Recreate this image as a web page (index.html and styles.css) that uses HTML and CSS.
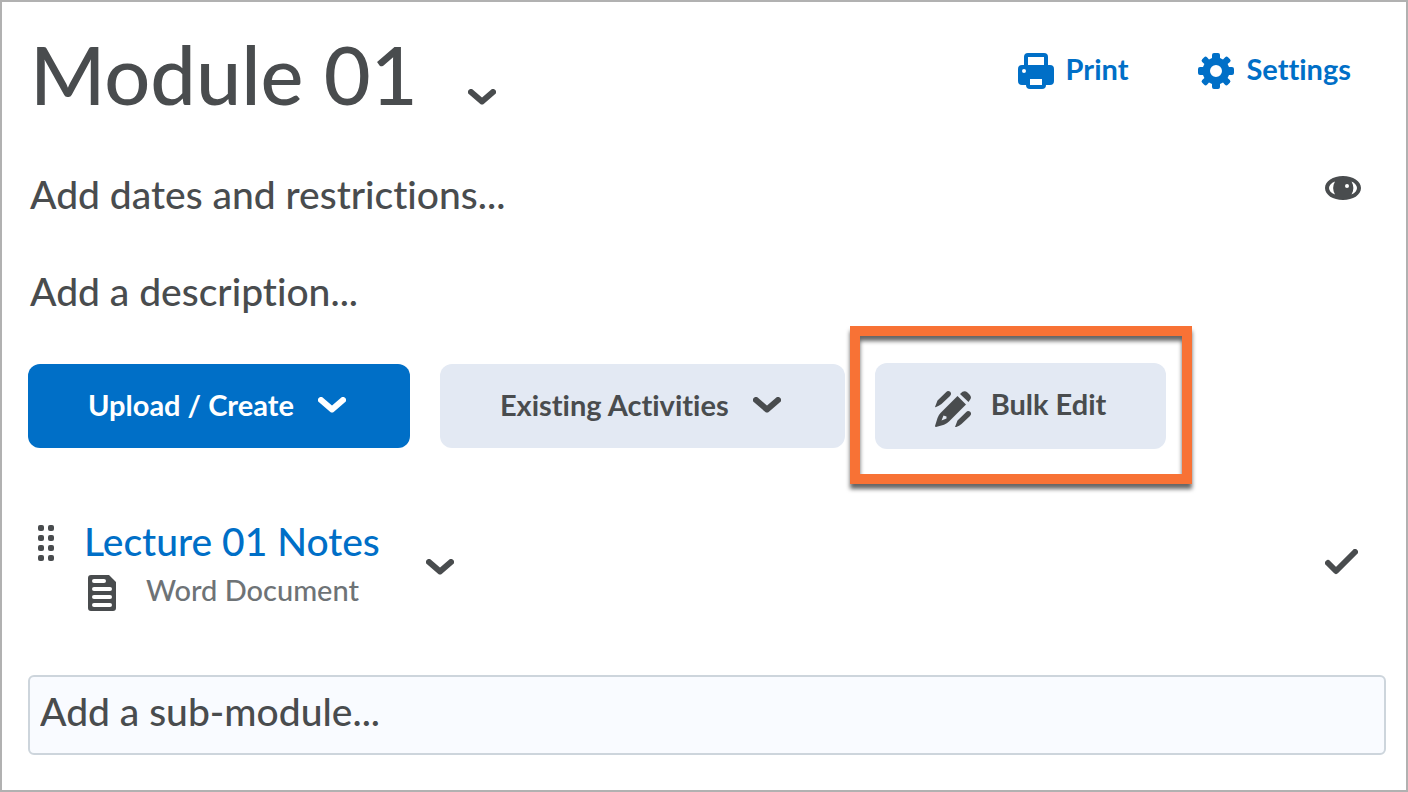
FILE: index.html
```html
<!DOCTYPE html>
<html lang="en">
<head>
    <meta charset="UTF-8">
    <meta name="viewport" content="width=device-width, initial-scale=1.0">
    <title>Module 01</title>
    <link rel="stylesheet" href="styles.css">
</head>
<body>

<main class="module">
    <header class="module-header">
        <h1>Module 01</h1>
        <button class="icon-btn title-menu" type="button" aria-label="Module 01 actions">
            <svg class="chevron" viewBox="0 0 28 16"><path d="M3 3L14 12.5L25 3"/></svg>
        </button>
        <nav class="module-tools">
            <a href="#print">
                <svg class="icon" viewBox="0 0 36 36">
                    <path fill-rule="evenodd" d="M6 12V4a4 4 0 0 1 4-4h16a4 4 0 0 1 4 4v8h2a4 4 0 0 1 4 4v12a4 4 0 0 1-4 4h-4a4 4 0 0 1-4 4H12a4 4 0 0 1-4-4H4a4 4 0 0 1-4-4V16a4 4 0 0 1 4-4zM10 4v8h16V4zM12 26v6h12v-6zM6 16a2 2 0 1 0 0 4a2 2 0 0 0 0-4z"/>
                </svg>
                Print
            </a>
            <a href="#settings">
                <svg class="icon" viewBox="0 0 36 36">
                    <path fill-rule="evenodd" d="M14 2q0-2 2-2h4q2 0 2 2v3l3 1.4l2.200-2.200q1.400-1.400 2.800 0l2 2q1.400 1.400 0 2.800L29.600 11L31 14h3q2 0 2 2v4q0 2-2 2h-3l-1.400 3l2.200 2q1.400 1.400 0 2.800l-2 2q-1.400 1.400-2.800 0L25 29.600L22 31v3q0 2-2 2h-4q-2 0-2-2v-3l-3-1.400l-2 2.200q-1.400 1.400-2.800 0l-2-2q-1.400-1.400 0-2.800L6.400 25L5 22H2q-2 0-2-2v-4q0-2 2-2h3l1.400-3L4.200 9q-1.400-1.400 0-2.800l2-2q1.400-1.400 2.800 0L11 6.400L14 5zM18 12a6 6 0 1 0 0 12a6 6 0 0 0 0-12z"/>
                </svg>
                Settings
            </a>
        </nav>
    </header>

    <div class="module-row">
        <button class="text-btn" type="button">Add dates and restrictions...</button>
        <button class="icon-btn visibility" type="button" aria-label="Visible">
            <svg class="icon eye" viewBox="0 0 36 24">
                <path fill-rule="evenodd" d="M18 0C28 0 36 5 36 12S28 24 18 24S0 19 0 12S8 0 18 0zM10 5.500C6 7 4 9.500 4 12s2 5 6 6.500C7.500 14 7.500 10 10 5.500zM26.500 5.500c2.500 4.500 2.500 8.500 0 13C30 17 32 14.500 32 12s-2-5-5.500-6.500zM22 8a2 2 0 1 0 0 4a2 2 0 0 0 0-4z"/>
            </svg>
        </button>
    </div>

    <div class="module-row">
        <button class="text-btn" type="button">Add a description...</button>
    </div>

    <div class="actions">
        <button class="btn btn-primary" type="button">
            Upload / Create
            <svg class="chevron" viewBox="0 0 28 16"><path d="M3 3L14 12.5L25 3"/></svg>
        </button>
        <button class="btn" type="button">
            Existing Activities
            <svg class="chevron" viewBox="0 0 28 16"><path d="M3 3L14 12.5L25 3"/></svg>
        </button>
        <div class="highlighted">
            <button class="btn btn-bulk" type="button">
                <svg class="icon" viewBox="0 0 36 36">
                    <path fill-rule="evenodd" d="M22.500 5L31 13.500L14 30.500Q12 32.500 9 33.700L1 36Q0 36 0 35L2.500 27Q3.500 24 5.500 22zM8.500 24.500L6.500 29.500L11.500 27.500L11.500 25.500Z"/>
                    <path d="M25 3L27.500 .8Q30 -.8 32.500 1.500L34.500 3.500Q37 6 35.200 8.500L33.500 11Z"/>
                    <path d="M0 16L2.500 9.500L11 1.200Q13 -.8 15.200 .8Q17 3 15 5L6.500 13Q4 15 .5 16.300Z"/>
                    <path d="M20 36L22.500 29.500L31 21.200Q33 19.200 35.200 20.800Q37 23 35 25L26.500 33Q24 35 20.500 36.300Z"/>
                </svg>
                Bulk Edit
            </button>
            <span class="highlight-frame"></span>
        </div>
    </div>

    <section class="topic">
        <svg class="drag-handle" viewBox="0 0 16 36">
            <rect x="0" y="0" width="6" height="6" rx="2"/><rect x="10" y="0" width="6" height="6" rx="2"/>
            <rect x="0" y="10" width="6" height="6" rx="2"/><rect x="10" y="10" width="6" height="6" rx="2"/>
            <rect x="0" y="20" width="6" height="6" rx="2"/><rect x="10" y="20" width="6" height="6" rx="2"/>
            <rect x="0" y="30" width="6" height="6" rx="2"/><rect x="10" y="30" width="6" height="6" rx="2"/>
        </svg>
        <div class="topic-info">
            <a class="topic-link" href="#lecture-01">Lecture 01 Notes</a>
            <div class="topic-type">
                <svg class="doc-icon" viewBox="0 0 28 36">
                    <path fill-rule="evenodd" d="M3 0H21L28 7V33a3 3 0 0 1-3 3H3a3 3 0 0 1-3-3V3a3 3 0 0 1 3-3zM6 4a2 2 0 0 0 0 4H16a2 2 0 0 0 0-4zM6 12a2 2 0 0 0 0 4H22a2 2 0 0 0 0-4zM6 20a2 2 0 0 0 0 4H22a2 2 0 0 0 0-4zM6 28a2 2 0 0 0 0 4H22a2 2 0 0 0 0-4z"/>
                </svg>
                Word Document
            </div>
        </div>
        <button class="icon-btn" type="button" aria-label="Lecture 01 Notes actions">
            <svg class="chevron" viewBox="0 0 28 16"><path d="M3 3L14 12.5L25 3"/></svg>
        </button>
        <svg class="check" viewBox="0 0 33 26" role="img" aria-label="Completed"><path d="M3 14L11 22L30 3"/></svg>
    </section>

    <input class="submodule-input" type="text" placeholder="Add a sub-module..." aria-label="Add a sub-module">
</main>

</body>
</html>
```

FILE: styles.css
```css
* {
    box-sizing: border-box;
}

body {
    margin: 0;
    font-family: Lato, "Liberation Sans", sans-serif;
    font-size: 39px;
    font-weight: 500;
    font-variant-ligatures: none;
    line-height: 48px;
    color: #494c4e;
    background-color: #fff;
}

button,
input {
    font: inherit;
    font-variant-ligatures: none;
    color: inherit;
}

button {
    padding: 0;
    border: none;
    background: none;
    cursor: pointer;
}

a {
    color: #006fc7;
    text-decoration: none;
}

svg {
    display: block;
    flex: none;
    fill: currentColor;
}

.module {
    min-height: 100vh;
    padding: 24px 20px 35px 26px;
    border: 2px solid #b1b1b1;
}

/* Header */
.module-header {
    display: flex;
    align-items: flex-start;
    margin-bottom: 48px;
    padding-left: 2px;
}

h1 {
    margin: 0;
    font-size: 81px;
    font-weight: 500;
    line-height: 96px;
}

.icon {
    width: 36px;
    height: 36px;
}

.icon-btn {
    display: flex;
}

.chevron,
.check {
    width: 28px;
    height: 16px;
    fill: none;
    stroke: currentColor;
    stroke-width: 6;
    stroke-linecap: round;
    stroke-linejoin: round;
}

.title-menu {
    margin: 63px 0 0 50px;
}

.module-tools {
    display: flex;
    gap: 70px;
    margin: 27px 35px 0 auto;
    font-size: 29px;
    font-weight: 700;
    line-height: 32px;
}

.module-tools a {
    display: flex;
    align-items: flex-start;
    gap: 12px;
}

/* Dates and description */
.module-row {
    display: flex;
    align-items: center;
    margin-bottom: 49px;
    padding-left: 2px;
}

.visibility {
    margin: 0 25px 12px auto;
}

.eye {
    height: 24px;
}

/* Buttons */
.actions {
    display: flex;
    align-items: center;
    gap: 30px;
    margin: -1px 0 68px;
}

.btn {
    display: flex;
    align-items: center;
    gap: 24px;
    height: 84px;
    padding: 0 64px 2px 60px;
    border-radius: 12px;
    font-size: 29px;
    font-weight: 700;
    background-color: #e3e9f3;
}

.btn-primary {
    color: #fff;
    background-color: #006fc7;
}

.btn-bulk {
    gap: 20px;
    height: 86px;
    padding: 0 60px 4px;
}

.btn-bulk .icon {
    margin-top: 9px;
}

.highlighted {
    position: relative;
}

.highlight-frame {
    position: absolute;
    inset: -37px -26px -35px -25px;
    border: 10px solid #f87235;
    filter: drop-shadow(0 5px 2px rgba(0, 0, 0, 0.6));
    pointer-events: none;
}

/* Topic */
.topic {
    display: flex;
    align-items: flex-start;
    padding-left: 10px;
    margin-bottom: 64px;
}

.drag-handle {
    width: 16px;
    height: 36px;
    margin: 8px 30px 0 0;
}

.topic-link {
    display: block;
}

.topic-type {
    display: flex;
    align-items: flex-start;
    gap: 30px;
    margin-top: 5px;
    padding-left: 4px;
    font-size: 29px;
    line-height: 40px;
    color: #6e7376;
}

.doc-icon {
    width: 28px;
    height: 36px;
    margin-top: 5px;
    color: #494c4e;
}

.topic .icon-btn {
    margin: 42px 0 0 46px;
}

.check {
    width: 33px;
    height: 26px;
    margin: 32px 28px 0 auto;
}

.submodule-input {
    display: block;
    width: 100%;
    height: 80px;
    padding: 0 10px 8px;
    border: 2px solid #cdd5dc;
    border-radius: 6px;
    background-color: #f9fbff;
}

.submodule-input::placeholder {
    color: inherit;
    opacity: 1;
}
```
